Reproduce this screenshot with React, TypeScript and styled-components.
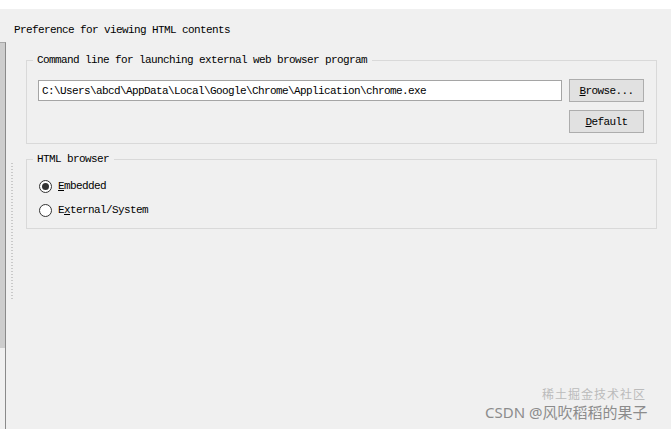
import React from 'react';
import styled, { createGlobalStyle } from 'styled-components';

const GlobalStyle = createGlobalStyle`
    html, body {
        margin:0;
        padding:0;
        background:#f0f0f0;
    }
    * {
        box-sizing:border-box;
    }
`

const Page = styled.div`
    position:relative;
    width:671px;
    height:429px;
    overflow:hidden;
    display:flex;
    flex-direction:column;
    background:#f0f0f0;
    font-family:"Liberation Mono", "DejaVu Sans Mono", monospace;
    font-size:11px;
    letter-spacing:-0.6px;
    color:#000;
`

const TopStrip = styled.div`
    height:9px;
    background:#fff;
    flex-shrink:0;
`

const Body = styled.div`
    flex:1;
    display:flex;
`

const LeftPane = styled.div`
    width:6px;
    margin-top:33px;
    border-top:1px solid #a8a8a8;
    border-right:1px solid #8a8a8a;
`

const Thumb = styled.div`
    height:305px;
    background:#cdcdcd;
`

const Gutter = styled.div`
    width:8px;
    display:flex;
`

const Dots = styled.div`
    width:2px;
    height:137px;
    margin-top:154px;
    margin-left:5px;
    background:repeating-linear-gradient(to bottom, #c9c9c9 0 1px, transparent 1px 3px);
`

const Content = styled.div`
    flex:1;
    padding-top:14px;
    display:flex;
    flex-direction:column;
`

const Title = styled.div`
    line-height:14px;
    height:14px;
`

const Group = styled.fieldset<{ $top: number }>`
    margin:${p => p.$top}px 0 0 12px;
    width:631px;
    border:1px solid #d9d9d9;
    padding:0 12px 10px 11px;
    display:flex;
    flex-direction:column;
`

const Legend = styled.legend`
    padding:0 5px 0 4px;
    margin-left:-5px;
    line-height:14px;
`

const FieldRow = styled.div`
    display:flex;
    align-items:center;
    gap:7px;
    margin-top:12px;
`

const PathInput = styled.div`
    width:524px;
    height:21px;
    background:#fff;
    border:1px solid #a5a5a5;
    padding-left:3px;
    display:flex;
    align-items:center;
    white-space:nowrap;
`

const ButtonRow = styled.div`
    display:flex;
    justify-content:flex-end;
    margin-top:8px;
`

const Button = styled.div`
    width:75px;
    height:23px;
    background:#e1e1e1;
    border:1px solid #adadad;
    display:flex;
    align-items:center;
    justify-content:center;
`

const Key = styled.span`
    text-decoration:underline;
`

const RadioList = styled.div`
    display:flex;
    flex-direction:column;
    gap:8px;
    margin-top:12px;
`

const RadioRow = styled.div`
    height:16px;
    display:flex;
    align-items:center;
    gap:6px;
    padding-left:1px;
`

const Circle = styled.div<{ $on?: boolean }>`
    width:13px;
    height:13px;
    border-radius:50%;
    border:1px solid #333;
    background:#fff;
    display:flex;
    align-items:center;
    justify-content:center;
    &::after {
        content:'';
        width:7px;
        height:7px;
        border-radius:50%;
        background:${p => (p.$on ? '#333' : 'transparent')};
    }
`

const Watermark = styled.div`
    position:absolute;
    left:485px;
    top:403px;
    font-family:"Noto Sans", "Noto Sans CJK SC", sans-serif;
    font-size:15px;
    line-height:18px;
    letter-spacing:0;
    color:#8c8c8c;
    white-space:nowrap;
`

const WatermarkBack = styled.div`
    position:absolute;
    left:542px;
    top:388px;
    font-family:"Noto Sans CJK SC", sans-serif;
    font-size:12px;
    line-height:12px;
    letter-spacing:1px;
    color:#bbbbbb;
    white-space:nowrap;
`

const App = () => {
    return (
        <Page>
            <GlobalStyle />
            <TopStrip />
            <Body>
                <LeftPane>
                    <Thumb />
                </LeftPane>
                <Gutter>
                    <Dots />
                </Gutter>
                <Content>
                    <Title>Preference for viewing HTML contents</Title>
                    <Group $top={16}>
                        <Legend>Command line for launching external web browser program</Legend>
                        <FieldRow>
                            <PathInput>C:\Users\abcd\AppData\Local\Google\Chrome\Application\chrome.exe</PathInput>
                            <Button><span><Key>B</Key>rowse...</span></Button>
                        </FieldRow>
                        <ButtonRow>
                            <Button><span><Key>D</Key>efault</span></Button>
                        </ButtonRow>
                    </Group>
                    <Group $top={8}>
                        <Legend>HTML browser</Legend>
                        <RadioList>
                            <RadioRow>
                                <Circle $on />
                                <span><Key>E</Key>mbedded</span>
                            </RadioRow>
                            <RadioRow>
                                <Circle />
                                <span>E<Key>x</Key>ternal/System</span>
                            </RadioRow>
                        </RadioList>
                    </Group>
                </Content>
            </Body>
            <WatermarkBack>稀土掘金技术社区</WatermarkBack>
            <Watermark>CSDN @风吹稻稻的果子</Watermark>
        </Page>
    );
};

export default App;
